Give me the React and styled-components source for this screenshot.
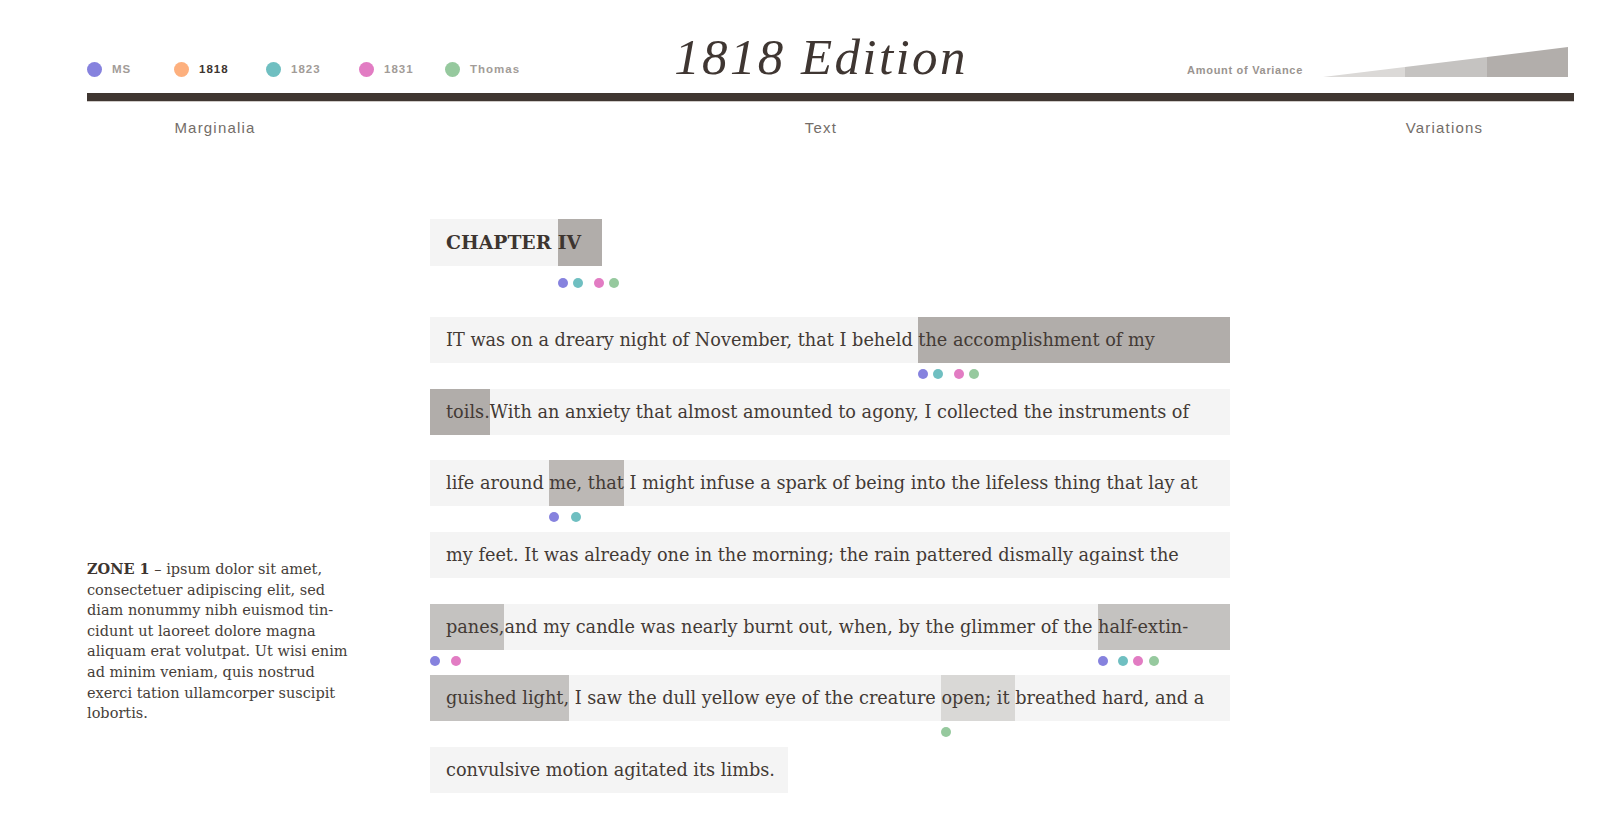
import React from 'react';
import styled, { createGlobalStyle } from 'styled-components';

const DOT = {
  ms: '#8682de',
  e1818: '#fdb07e',
  e1823: '#6fbfc1',
  e1831: '#e27cc3',
  thomas: '#96c99e',
};

const SHADE = {
  1: '#d9d8d6',
  2: '#c4c2c0',
  25: '#bcb8b5',
  3: '#b1adaa',
};

const legend = [
  { key: 'ms', label: 'MS', w: 87 },
  { key: 'e1818', label: '1818', w: 92, active: true },
  { key: 'e1823', label: '1823', w: 93 },
  { key: 'e1831', label: '1831', w: 86 },
  { key: 'thomas', label: 'Thomas', w: 90 },
];

const allFour = [
  { c: 'ms', gap: 0 },
  { c: 'e1823', gap: 5 },
  { c: 'e1831', gap: 11 },
  { c: 'thomas', gap: 5 },
];

const rows = [
  [
    { t: 'IT was on a dreary night of November, that I beheld ' },
    { t: 'the accomplishment of my', lv: 3, grow: true, dots: allFour },
  ],
  [
    { t: 'toils.', lv: 3 },
    { t: 'With an anxiety that almost amounted to agony, I collected the instruments of' },
  ],
  [
    { t: 'life around ' },
    { t: 'me, that', lv: 25, dots: [{ c: 'ms', gap: 0 }, { c: 'e1823', gap: 12 }] },
    { t: ' I might infuse a spark of being into the lifeless thing that lay at' },
  ],
  [{ t: 'my feet. It was already one in the morning; the rain pattered dismally against the' }],
  [
    { t: 'panes,', lv: 2, dots: [{ c: 'ms', gap: 0 }, { c: 'e1831', gap: 11 }] },
    { t: 'and my candle was nearly burnt out, when, by the glimmer of the ' },
    {
      t: 'half-extin-',
      lv: 2,
      grow: true,
      dots: [
        { c: 'ms', gap: 0 },
        { c: 'e1823', gap: 10 },
        { c: 'e1831', gap: 5 },
        { c: 'thomas', gap: 6 },
      ],
    },
  ],
  [
    { t: 'guished light,', lv: 2 },
    { t: ' I saw the dull yellow eye of the creature ' },
    { t: 'open; it ', lv: 1, dots: [{ c: 'thomas', gap: 0 }] },
    { t: 'breathed hard, and a' },
  ],
];

const GlobalStyle = createGlobalStyle`
  body {
    margin: 0;
    background: #ffffff;
    font-family: "Liberation Sans", Arial, sans-serif;
  }
`;

const Page = styled.div`
  padding: 0 44px 30px 87px;
`;

const TopRow = styled.div`
  display: grid;
  grid-template-columns: 564px 340px 1fr;
  align-items: end;
  height: 81px;
`;

const Legend = styled.div`
  display: flex;
  margin-bottom: 4px;
`;

const LegendItem = styled.div`
  display: flex;
  align-items: center;
  gap: 10px;
  width: ${(p) => p.$w}px;
  flex-shrink: 0;
`;

const LegendDot = styled.span`
  width: 15px;
  height: 15px;
  border-radius: 50%;
  background: ${(p) => DOT[p.$c]};
`;

const LegendLabel = styled.span`
  font-size: 11.5px;
  font-weight: 700;
  letter-spacing: 1px;
  line-height: 15px;
  color: ${(p) => (p.$active ? '#3d3530' : '#a29c98')};
`;

const Title = styled.h1`
  margin: 0;
  text-align: center;
  font-family: "Liberation Serif", "Times New Roman", serif;
  font-style: italic;
  font-weight: 400;
  font-size: 51px;
  line-height: 48px;
  letter-spacing: 2.4px;
  color: #3f3632;
  white-space: nowrap;
`;

const Variance = styled.div`
  justify-self: end;
  display: flex;
  align-items: flex-end;
  gap: 20px;
  margin: 0 6px 4px 0;
`;

const VarianceLabel = styled.span`
  font-size: 11px;
  font-weight: 700;
  letter-spacing: 0.7px;
  line-height: 14px;
  color: #9a948f;
`;

const Rule = styled.div`
  height: 8px;
  margin-top: 12px;
  background: #3f3631;
  border-bottom: 1px solid #cfcbc8;
`;

const ColumnLabels = styled.div`
  display: grid;
  grid-template-columns: 256px 956px 1fr;
  margin-top: 16px;
`;

const ColumnLabel = styled.div`
  text-align: center;
  font-size: 15px;
  line-height: 20px;
  letter-spacing: 1.2px;
  color: #746d68;
  padding-left: ${(p) => p.$pl || 0}px;
`;

const Body = styled.div`
  display: flex;
  margin-top: 81px;
`;

const Marginalia = styled.aside`
  width: 343px;
  flex-shrink: 0;
  padding-top: 340px;
`;

const Zone = styled.p`
  margin: 0;
  font-family: "DejaVu Serif", Georgia, serif;
  font-size: 14.5px;
  line-height: 20.6px;
  color: #463e39;
  white-space: nowrap;

  strong {
    color: #3d3530;
  }
`;

const TextColumn = styled.main`
  display: flex;
  flex-direction: column;
  align-items: flex-start;
  gap: 25.7px;
`;

const Row = styled.div`
  display: flex;
  width: ${(p) => (p.$fit ? 'auto' : '800px')};
  height: ${(p) => (p.$chapter ? 47 : 46)}px;
  line-height: ${(p) => (p.$chapter ? 47 : 46)}px;
  margin-bottom: ${(p) => (p.$chapter ? 25.3 : 0)}px;
  background: #f4f4f4;
  white-space: pre;
  font-family: "DejaVu Serif", Georgia, serif;
  font-size: ${(p) => (p.$chapter ? 18.8 : 17.7)}px;
  font-weight: ${(p) => (p.$chapter ? 700 : 400)};
  color: ${(p) => (p.$chapter ? '#3d3530' : '#433a35')};
`;

const Seg = styled.span`
  position: relative;
  padding-left: ${(p) => (p.$first ? 16 : 0)}px;
  padding-right: ${(p) => p.$pr || 0}px;
  flex-grow: ${(p) => (p.$grow ? 1 : 0)};
  background: ${(p) => (p.$lv ? SHADE[p.$lv] : 'transparent')};
`;

const Dots = styled.span`
  position: absolute;
  left: 0;
  top: calc(100% + ${(p) => p.$top}px);
  display: flex;
`;

const Dot = styled.span`
  width: 10px;
  height: 10px;
  border-radius: 50%;
  margin-left: ${(p) => p.$gap}px;
  background: ${(p) => DOT[p.$c]};
`;

const DotGroup = ({ dots, top = 6 }) => (
  <Dots $top={top}>
    {dots.map((d, i) => (
      <Dot key={i} $c={d.c} $gap={d.gap} />
    ))}
  </Dots>
);

const VarianceWedge = () => (
  <svg width="245" height="30" viewBox="0 0 245 30">
    <polygon points="0,30 82,20 82,30" fill="#dbd9d7" />
    <polygon points="82,20 164,9.9 164,30 82,30" fill="#c5c3c1" />
    <polygon points="164,9.9 245,0 245,30 164,30" fill="#b2aeab" />
  </svg>
);

const App = () => (
  <Page>
    <GlobalStyle />
    <TopRow>
      <Legend>
        {legend.map((l) => (
          <LegendItem key={l.key} $w={l.w}>
            <LegendDot $c={l.key} />
            <LegendLabel $active={l.active}>{l.label}</LegendLabel>
          </LegendItem>
        ))}
      </Legend>
      <Title>1818 Edition</Title>
      <Variance>
        <VarianceLabel>Amount of Variance</VarianceLabel>
        <VarianceWedge />
      </Variance>
    </TopRow>
    <Rule />
    <ColumnLabels>
      <ColumnLabel>Marginalia</ColumnLabel>
      <ColumnLabel>Text</ColumnLabel>
      <ColumnLabel $pl={16}>Variations</ColumnLabel>
    </ColumnLabels>

    <Body>
      <Marginalia>
        <Zone>
          <strong>ZONE 1</strong> – ipsum dolor sit amet,<br />
          consectetuer adipiscing elit, sed<br />
          diam nonummy nibh euismod tin-<br />
          cidunt ut laoreet dolore magna<br />
          aliquam erat volutpat. Ut wisi enim<br />
          ad minim veniam, quis nostrud<br />
          exerci tation ullamcorper suscipit<br />
          lobortis.
        </Zone>
      </Marginalia>

      <TextColumn>
        <Row $fit $chapter>
          <Seg $first>CHAPTER </Seg>
          <Seg $lv={3} $pr={21}>
            IV
            <DotGroup dots={allFour} top={12} />
          </Seg>
        </Row>

        {rows.map((segs, r) => (
          <Row key={r}>
            {segs.map((s, i) => (
              <Seg key={i} $first={i === 0} $lv={s.lv} $grow={s.grow}>
                {s.t}
                {s.dots && <DotGroup dots={s.dots} />}
              </Seg>
            ))}
          </Row>
        ))}

        <Row $fit>
          <Seg $first $pr={13}>convulsive motion agitated its limbs.</Seg>
        </Row>
      </TextColumn>
    </Body>
  </Page>
);

export default App;
